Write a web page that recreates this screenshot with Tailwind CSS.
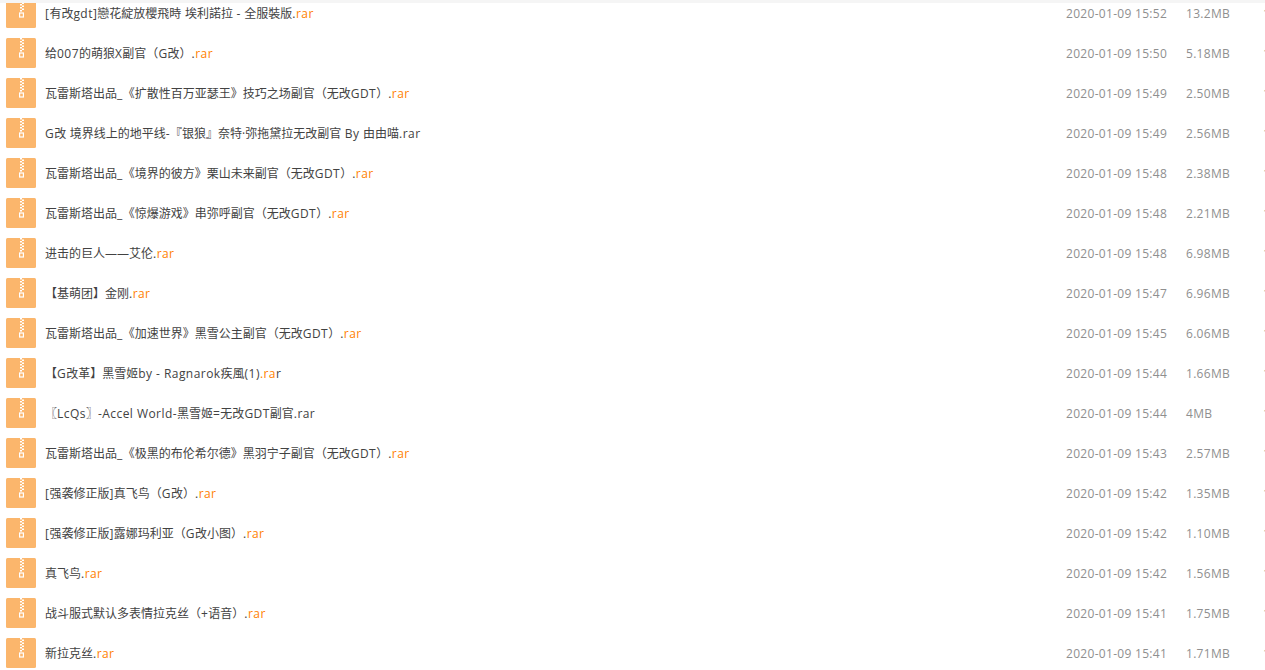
<!DOCTYPE html>
<html lang="zh-CN">
<head>
<meta charset="UTF-8" />
<title>文件列表</title>
<script src="https://cdn.jsdelivr.net/npm/@tailwindcss/browser@4"></script>
</head>
<body class="bg-white h-[670px] w-[1265px] overflow-hidden font-['Open_Sans','Noto_Sans_CJK_SC',sans-serif]">
<div class="h-[670px] overflow-hidden relative">
  <div class="relative z-10 h-[3px] bg-[#f5f5f5]"></div>
  <div class="-mt-[9px]">
    <script>
      // rows: [name, date, size, orange part of the extension]
      const files = [
        ["[有改gdt]戀花綻放櫻飛時 埃利諾拉 - 全服裝版.", "2020-01-09 15:52", "13.2MB", "rar", ""],
        ["给007的萌狼X副官（G改）.", "2020-01-09 15:50", "5.18MB", "rar", ""],
        ["瓦雷斯塔出品_《扩散性百万亚瑟王》技巧之场副官（无改GDT）.", "2020-01-09 15:49", "2.50MB", "rar", ""],
        ["G改 境界线上的地平线-『银狼』奈特·弥拖黛拉无改副官 By 由由喵.rar", "2020-01-09 15:49", "2.56MB", "", ""],
        ["瓦雷斯塔出品_《境界的彼方》栗山未来副官（无改GDT）.", "2020-01-09 15:48", "2.38MB", "rar", ""],
        ["瓦雷斯塔出品_《惊爆游戏》串弥呼副官（无改GDT）.", "2020-01-09 15:48", "2.21MB", "rar", ""],
        ["进击的巨人——艾伦.", "2020-01-09 15:48", "6.98MB", "rar", ""],
        ["【基萌团】金刚.", "2020-01-09 15:47", "6.96MB", "rar", ""],
        ["瓦雷斯塔出品_《加速世界》黑雪公主副官（无改GDT）.", "2020-01-09 15:45", "6.06MB", "rar", ""],
        ["【G改革】黑雪姬by - Ragnarok疾風(1)", "2020-01-09 15:44", "1.66MB", ".ra", "r"],
        ["〖LcQs〗-Accel World-黑雪姬=无改GDT副官.rar", "2020-01-09 15:44", "4MB", "", ""],
        ["瓦雷斯塔出品_《极黑的布伦希尔德》黑羽宁子副官（无改GDT）.", "2020-01-09 15:43", "2.57MB", "rar", ""],
        ["[强袭修正版]真飞鸟（G改）.", "2020-01-09 15:42", "1.35MB", "rar", ""],
        ["[强袭修正版]露娜玛利亚（G改小图）.", "2020-01-09 15:42", "1.10MB", "rar", ""],
        ["真飞鸟.", "2020-01-09 15:42", "1.56MB", "rar", ""],
        ["战斗服式默认多表情拉克丝（+语音）.", "2020-01-09 15:41", "1.75MB", "rar", ""],
        ["新拉克丝.", "2020-01-09 15:41", "1.71MB", "rar", ""],
      ];
      const icon = `<svg width="30" height="30" viewBox="0 0 30 30" class="block"><rect width="30" height="30" rx="1.5" fill="#fbb66c"/><path d="M14 0h2v1.500h-2zM14 3h2v1.500h-2zM14 6h2v1.500h-2zM14 9h2v1.500h-2zM14 12h2v1.500h-2zM16 1.500h2v1.500h-2zM16 4.500h2v1.500h-2zM16 7.500h2v1.500h-2zM16 10.500h2v1.500h-2z" fill="#fff"/><rect x="13.600" y="15" width="3.800" height="4" fill="none" stroke="#fff" stroke-width="1.200"/></svg>`;
      // latin runs sit wider in the reference than in Open Sans
      const wide = (s) => s.replace(/[\x20-\x7e]+/g, (m) => `<span class="tracking-[0.45px]">${m}</span>`);
      document.write(files.map(([name, date, size, orange, tail]) => `
        <div class="flex items-center h-[40px]">
          <div class="ml-[6px] w-[39px] self-start mt-[4px]">${icon}</div>
          <div class="flex-1 text-[12px] text-[#424242] whitespace-nowrap">${wide(name)}<span class="text-[#ff7f00] font-medium tracking-[0.45px]">${orange}</span>${wide(tail)}</div>
          <div class="w-[120px] text-[12px] text-[#8f8f8f] whitespace-nowrap tracking-[0.3px]">${date}</div>
          <div class="w-[77px] text-[12px] text-[#8f8f8f] whitespace-nowrap tracking-[0.3px]">${size}</div>
          <div class="w-[2px] overflow-hidden text-[12px] text-[#8f8f8f]">1</div>
        </div>`).join(""));
    </script>
  </div>
</div>
</body>
</html>
